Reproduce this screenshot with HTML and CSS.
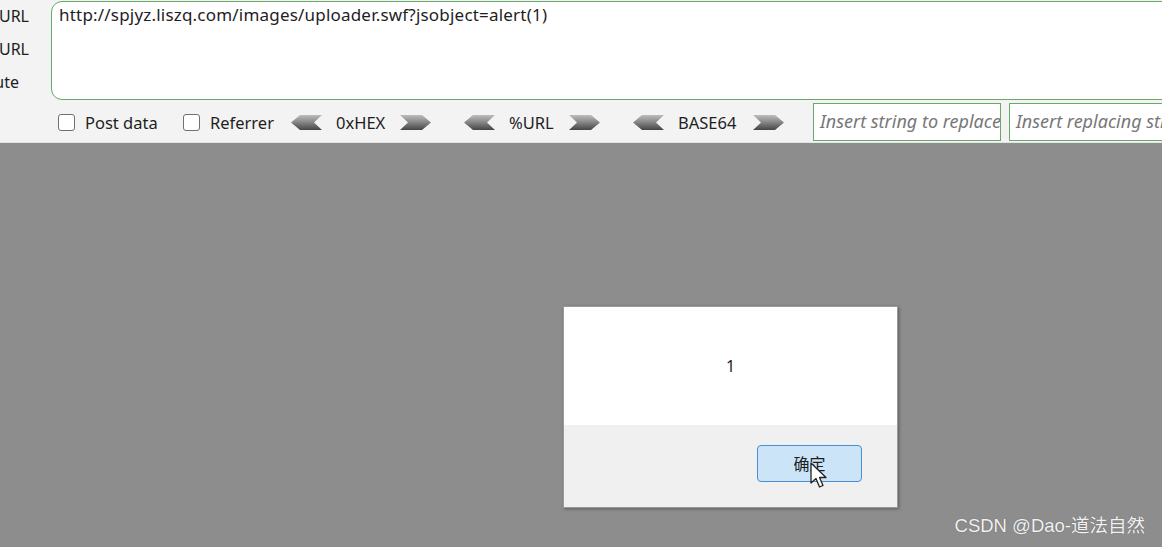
FILE: index.html
```html
<!DOCTYPE html>
<html lang="en">
<head>
<meta charset="utf-8">
<link rel="stylesheet" href="styles.css">
</head>
<body>
<div class="toolbar">
  <div class="top-row">
    <div class="labels">
      <div class="label"><span>Load URL</span></div>
      <div class="label"><span>Split URL</span></div>
      <div class="label label-exec"><span>Execute</span></div>
    </div>
    <div class="url-box">http://spjyz.liszq.com/images/uploader.swf?jsobject=alert(1)</div>
  </div>
  <div class="controls">
    <label class="check"><span class="box"></span><span class="check-text t-post">Post data</span></label>
    <label class="check"><span class="box"></span><span class="check-text t-ref">Referrer</span></label>
    <div class="enc">
      <svg class="arrow" width="31" height="15" viewBox="0 0 31 15"><defs><linearGradient id="g1" x1="0" y1="0" x2="0" y2="1"><stop offset="0" stop-color="#bdbdbd"/><stop offset="0.45" stop-color="#8a8a8a"/><stop offset="1" stop-color="#454545"/></linearGradient></defs><polygon points="0,7.5 9,0 31,0 23,7.5 31,15 9,15" fill="url(#g1)"/></svg>
      <span class="enc-label t-hex">0xHEX</span>
      <svg class="arrow" width="31" height="15" viewBox="0 0 31 15"><polygon points="0,0 22,0 31,7.5 22,15 0,15 8,7.5" fill="url(#g1)"/></svg>
    </div>
    <div class="enc">
      <svg class="arrow" width="31" height="15" viewBox="0 0 31 15"><polygon points="0,7.5 9,0 31,0 23,7.5 31,15 9,15" fill="url(#g1)"/></svg>
      <span class="enc-label t-url">%URL</span>
      <svg class="arrow" width="31" height="15" viewBox="0 0 31 15"><polygon points="0,0 22,0 31,7.5 22,15 0,15 8,7.5" fill="url(#g1)"/></svg>
    </div>
    <div class="enc enc-last">
      <svg class="arrow" width="31" height="15" viewBox="0 0 31 15"><polygon points="0,7.5 9,0 31,0 23,7.5 31,15 9,15" fill="url(#g1)"/></svg>
      <span class="enc-label t-b64">BASE64</span>
      <svg class="arrow" width="31" height="15" viewBox="0 0 31 15"><polygon points="0,0 22,0 31,7.5 22,15 0,15 8,7.5" fill="url(#g1)"/></svg>
    </div>
    <div class="field field-a">Insert string to replace</div>
    <div class="field field-b">Insert replacing string</div>
  </div>
</div>
<div class="stage">
  <div class="dialog">
    <div class="dialog-body">1</div>
    <div class="dialog-foot">
      <button class="ok">确定</button>
    </div>
    <svg class="cursor" width="20" height="28" viewBox="0 0 20 28"><path d="M1,1 L1,21 L6,16.5 L9.5,25 L13,23.5 L9.5,15.5 L16,15.5 Z" fill="#fff" stroke="#222" stroke-width="1.3" stroke-linejoin="round"/></svg>
  </div>
  <div class="watermark">CSDN @Dao-道法自然</div>
</div>
</body>
</html>
```
FILE: styles.css
```css
html, body {
  margin: 0;
  padding: 0;
}
body {
  width: 1162px;
  height: 547px;
  overflow: hidden;
  display: flex;
  flex-direction: column;
  font-family: "Noto Sans", "Noto Sans CJK SC", sans-serif;
  color: #1e1e1e;
  background: #8d8d8d;
}
.toolbar {
  background: #f3f3f3;
  height: 142px;
  border-bottom: 1px solid #e4e4e4;
  overflow: hidden;
  display: flex;
  flex-direction: column;
}
.top-row {
  display: flex;
  gap: 22px;
  height: 102px;
}
.labels {
  width: 29px;
  display: flex;
  flex-direction: column;
  padding-top: 3px;
}
.label {
  height: 33px;
  display: flex;
  justify-content: flex-end;
  overflow: hidden;
  white-space: nowrap;
  font-size: 16px;
  line-height: 26px;
}
.label span {
  flex: none;
}
.label-exec span {
  margin-right: 10px;
}
.url-box {
  flex: 1;
  margin-right: -30px;
  margin-top: 1px;
  height: 99px;
  box-sizing: border-box;
  border: 1.5px solid #6aa86a;
  border-radius: 11px;
  background: #fff;
  padding: 2px 7px;
  font-size: 17px;
  letter-spacing: 0.2px;
  line-height: 22px;
  white-space: nowrap;
}
.controls {
  display: flex;
  align-items: center;
  height: 40px;
  padding-left: 58px;
  font-size: 16.5px;
  white-space: nowrap;
}
.check {
  display: flex;
  align-items: center;
  gap: 10px;
  margin-right: 23px;
}
.check-text {
  flex: none;
}
.t-post { width: 75px; }
.t-ref { width: 64px; margin-right: -6px; }
.box {
  width: 17px;
  height: 17px;
  border: 1.5px solid #707070;
  border-radius: 3px;
  background: #fff;
  box-sizing: border-box;
  flex: none;
}
.enc {
  display: flex;
  align-items: center;
  margin-right: 33px;
}
.enc .arrow {
  display: block;
  flex: none;
}
.enc-label {
  flex: none;
  margin: 0 13px 0 14px;
}
.t-hex { width: 51px; }
.t-url { width: 47px; }
.t-b64 { width: 62px; }
.enc-last {
  margin-right: 29px;
}
.field {
  height: 38px;
  box-sizing: border-box;
  border: 1.5px solid #6aa86a;
  background: #fff;
  color: #777;
  font-style: italic;
  font-size: 18px;
  line-height: 35px;
  padding-left: 6px;
  white-space: nowrap;
  overflow: hidden;
  flex: none;
}
.field-a {
  width: 188px;
}
.field-b {
  width: 180px;
  margin-left: 8px;
}
.stage {
  flex: 1;
  position: relative;
  padding: 163px 0 0 563px;
}
.dialog {
  position: relative;
  width: 335px;
  background: #fff;
  box-shadow: 1px 1px 3px rgba(0,0,0,0.35);
  border: 1px solid #9a9a9a;
  box-sizing: border-box;
}
.dialog-body {
  height: 118px;
  display: flex;
  align-items: center;
  justify-content: center;
  font-size: 16px;
}
.dialog-foot {
  height: 82px;
  background: #f0f0f0;
  display: flex;
  align-items: center;
  justify-content: flex-end;
  padding-right: 35px;
}
.ok {
  width: 105px;
  height: 37px;
  background: #cce4f7;
  border: 1.5px solid #4a8fd2;
  border-radius: 4px;
  font-family: "Noto Sans CJK SC", sans-serif;
  font-size: 16px;
  color: #1e1e1e;
  padding: 0;
  margin-bottom: 6px;
}
.cursor {
  position: absolute;
  left: 246px;
  top: 155px;
}
.watermark {
  position: absolute;
  right: 17px;
  bottom: 10px;
  font-family: "Liberation Sans", "Noto Sans CJK SC", sans-serif;
  font-size: 18.5px;
  color: #f2f2f2;
  text-shadow: 0 0 1px rgba(0,0,0,0.4);
}
```
